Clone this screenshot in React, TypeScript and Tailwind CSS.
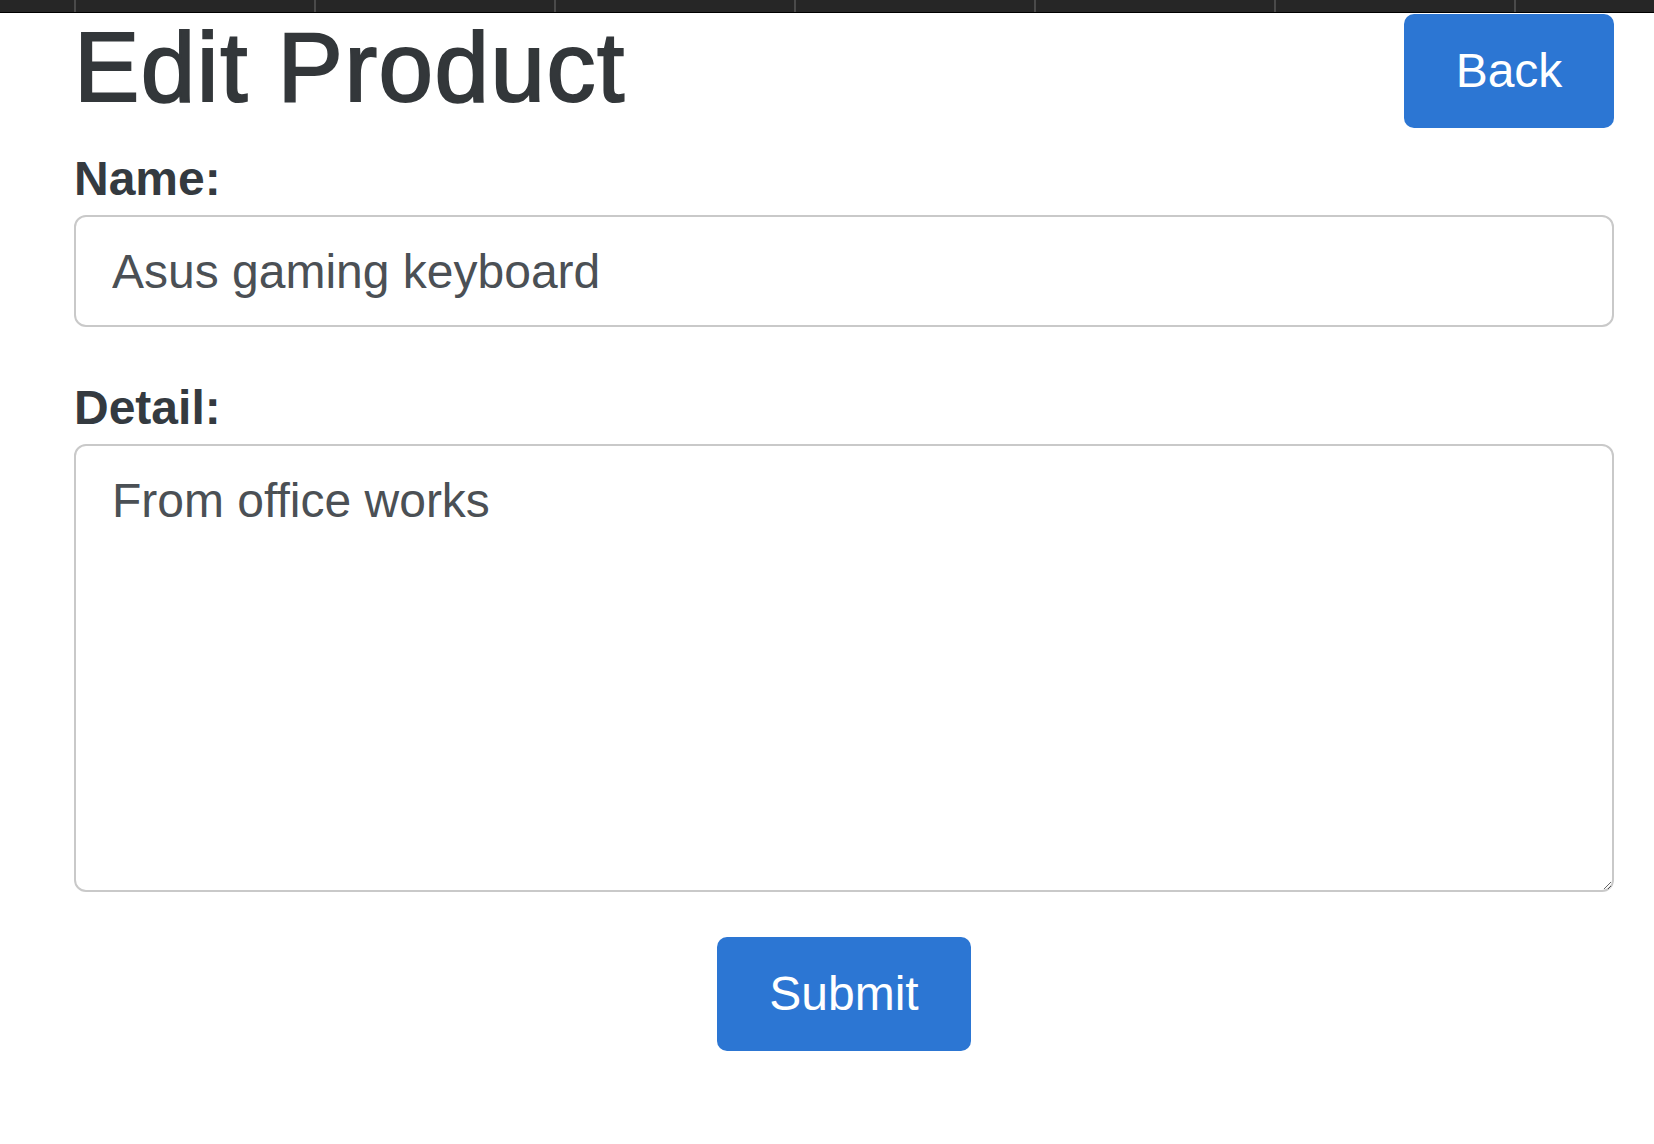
import React, { useState } from 'react';

const tabs = [0, 1, 2, 3, 4, 5, 6];

export default function App() {
  const [name, setName] = useState('Asus gaming keyboard');
  const [detail, setDetail] = useState('From office works');

  return (
    <div className="min-h-[1144px] w-full overflow-hidden bg-white font-['Liberation_Sans',Arial,sans-serif] text-[#343a40]">
      {/* Top strip */}
      <div className="flex h-[13px] overflow-hidden border-b border-black bg-[#262626] pl-[74px]">
        {tabs.map((t) => (
          <div key={t} className="h-full w-[240px] shrink-0 border-l-2 border-[#4a4a4a]" />
        ))}
      </div>

      <div className="ml-[74px] mr-[40px]">
        {/* Header */}
        <div className="flex items-start justify-between">
          <h1 className="mt-[5px] text-[98px] leading-none tracking-[1.5px] text-[#33373a] [-webkit-text-stroke:2px_#33373a]">
            Edit Product
          </h1>
          <button className="mt-px h-[114px] w-[210px] rounded-[10px] bg-[#2c76d3] text-[48px] leading-none text-white">
            Back
          </button>
        </div>

        {/* Form */}
        <form className="mt-[15px]" onSubmit={(e) => e.preventDefault()}>
          <label className="block text-[48px] font-bold leading-[72px] text-[#343a40]">Name:</label>
          <input
            className="block h-[112px] w-full rounded-[12px] border-2 border-[#c9c9c9] bg-white px-[36px] text-[48px] text-[#4b5055] outline-none"
            value={name}
            onChange={(e) => setName(e.target.value)}
          />

          <label className="mt-[45px] block text-[48px] font-bold leading-[72px] text-[#343a40]">
            Detail:
          </label>
          <textarea
            className="block h-[448px] w-full rounded-[12px] border-2 border-[#c9c9c9] bg-white px-[36px] py-[19px] text-[48px] leading-[72px] text-[#4b5055] outline-none"
            value={detail}
            onChange={(e) => setDetail(e.target.value)}
          />

          <div className="mt-[45px] flex justify-center">
            <button
              type="submit"
              className="h-[114px] w-[254px] rounded-[10px] bg-[#2c76d3] text-[48px] leading-none text-white"
            >
              Submit
            </button>
          </div>
        </form>
      </div>
    </div>
  );
}
